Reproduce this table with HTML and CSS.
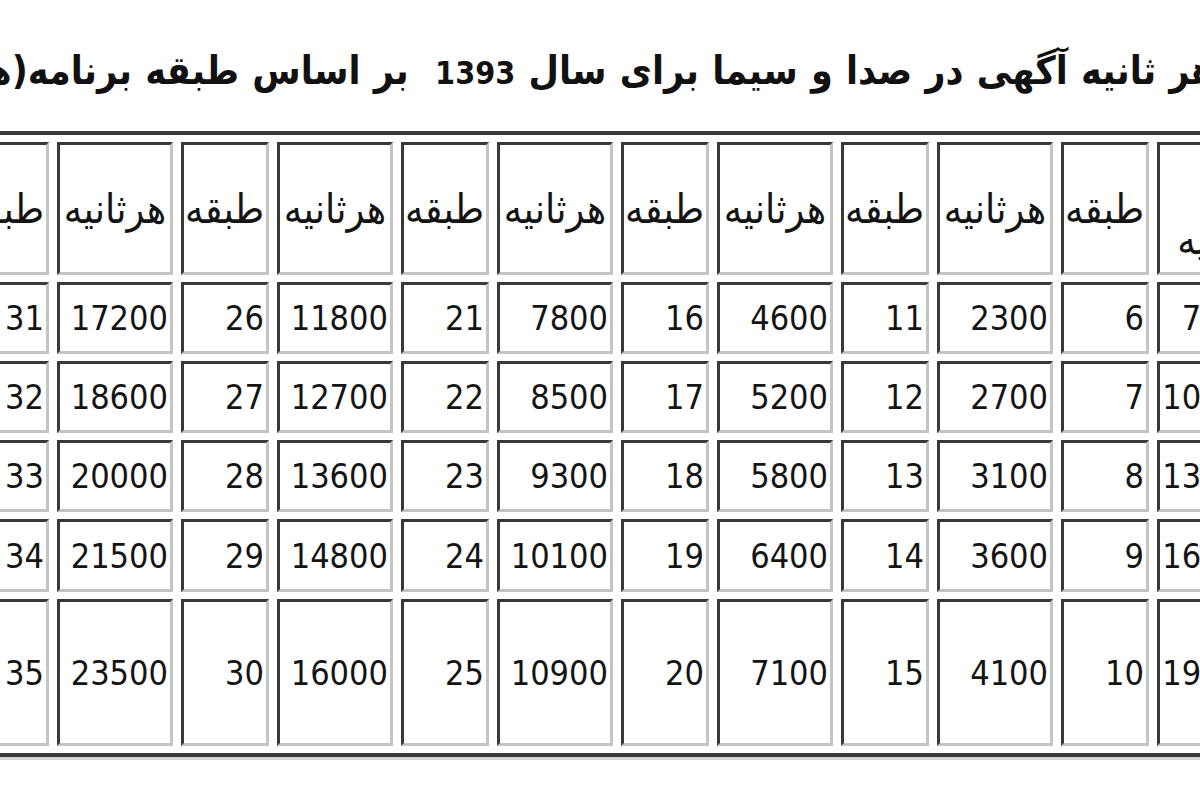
FILE: index.html
```html
<!DOCTYPE html>
<html lang="fa">
<head>
<meta charset="utf-8">
<title>تعرفه آگهی صدا و سیما 1393</title>
<link rel="stylesheet" href="styles.css">
</head>
<body>
<div class="page">
  <div class="title-row">
    <h1 class="title">تعرفه پخش هر ثانیه آگهی در صدا و سیما برای سال <span class="num">1393</span>&nbsp; بر اساس طبقه برنامه(هزار ریال)</h1>
  </div>
  <div class="frame">
    <table class="rates">
      <colgroup>
        <col class="c-first">
        <col class="c-narrow"><col class="c-wide">
        <col class="c-narrow"><col class="c-wide">
        <col class="c-narrow"><col class="c-wide">
        <col class="c-narrow"><col class="c-wide">
        <col class="c-narrow"><col class="c-wide">
        <col class="c-narrow">
      </colgroup>
      <tr class="r-head">
        <td class="h"><span class="wrap">هر ثانیه</span></td>
        <td class="h">طبقه</td><td class="h">هرثانیه</td>
        <td class="h">طبقه</td><td class="h">هرثانیه</td>
        <td class="h">طبقه</td><td class="h">هرثانیه</td>
        <td class="h">طبقه</td><td class="h">هرثانیه</td>
        <td class="h">طبقه</td><td class="h">هرثانیه</td>
        <td class="h">طبقه</td>
      </tr>
      <tr class="r1">
        <td>700</td><td>6</td><td>2300</td><td>11</td><td>4600</td><td>16</td><td>7800</td><td>21</td><td>11800</td><td>26</td><td>17200</td><td>31</td>
      </tr>
      <tr class="r2">
        <td>1000</td><td>7</td><td>2700</td><td>12</td><td>5200</td><td>17</td><td>8500</td><td>22</td><td>12700</td><td>27</td><td>18600</td><td>32</td>
      </tr>
      <tr class="r3">
        <td>1300</td><td>8</td><td>3100</td><td>13</td><td>5800</td><td>18</td><td>9300</td><td>23</td><td>13600</td><td>28</td><td>20000</td><td>33</td>
      </tr>
      <tr class="r4">
        <td>1600</td><td>9</td><td>3600</td><td>14</td><td>6400</td><td>19</td><td>10100</td><td>24</td><td>14800</td><td>29</td><td>21500</td><td>34</td>
      </tr>
      <tr class="r5">
        <td>1900</td><td>10</td><td>4100</td><td>15</td><td>7100</td><td>20</td><td>10900</td><td>25</td><td>16000</td><td>30</td><td>23500</td><td>35</td>
      </tr>
    </table>
  </div>
</div>
</body>
</html>
```
FILE: styles.css
```css
html, body {
  margin: 0;
  padding: 0;
  background: #ffffff;
}

body {
  font-family: "DejaVu Sans Condensed", "DejaVu Sans", sans-serif;
  color: #141414;
}

.page {
  width: 1200px;
  height: 800px;
  overflow: hidden;
}

.title-row {
  height: 131px;
  direction: rtl;
}

.title {
  margin: 0 -229px 0 0;
  padding-top: 47px;
  direction: rtl;
  text-align: right;
  white-space: nowrap;
  font-family: "DejaVu Sans Condensed", "DejaVu Sans", sans-serif;
  font-size: 39px;
  line-height: 48px;
  word-spacing: 1px;
  font-weight: bold;
  color: #111111;
}

.title .num {
  font-size: 32px;
  letter-spacing: -1.5px;
  word-spacing: 0;
}

.frame {
  direction: rtl;
}

.rates {
  direction: rtl;
  border-collapse: separate;
  border-spacing: 8px 7px;
  table-layout: fixed;
  width: 1300px;
  margin-right: -53px;
  border-top: 4px solid #3a3a3a;
  border-bottom: 4px solid #3a3a3a;
  box-shadow: 0 3px 0 #d6d6d6;
}

.c-first { width: 88px; }
.c-narrow { width: 88px; }
.c-wide { width: 116px; }

.rates td {
  box-sizing: border-box;
  border-style: solid;
  border-width: 3px;
  border-color: #383838 #c4c4c4 #c4c4c4 #383838;
  padding: 0 2px 0 2px;
  text-align: right;
  vertical-align: middle;
  font-size: 34px;
  line-height: 40px;
  white-space: nowrap;
  overflow: hidden;
}

.rates td.h {
  font-size: 41px;
  line-height: 46px;
  text-align: center;
}

.rates td.h .wrap {
  white-space: normal;
  display: block;
  text-align: right;
  text-indent: -24px;
  line-height: 62px;
}

.r-head td { height: 133px; }
.r1 td { height: 72px; }
.r2 td { height: 72px; }
.r3 td { height: 72px; }
.r4 td { height: 73px; }
.r5 td { height: 147px; }
```
